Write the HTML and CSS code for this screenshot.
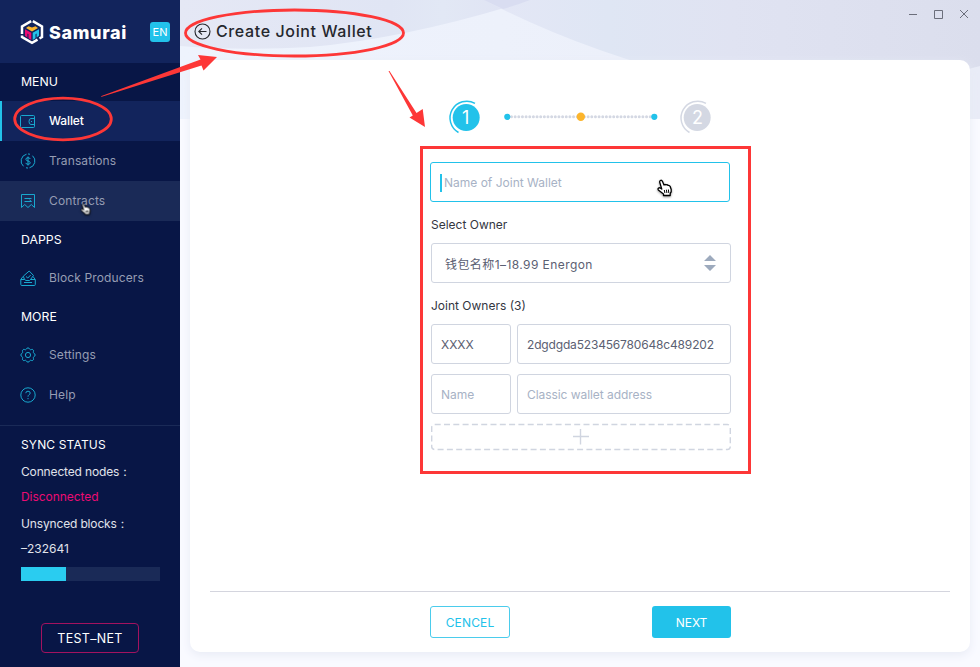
FILE: index.html
```html
<!DOCTYPE html>
<html lang="en">
<head>
<meta charset="utf-8">
<title>Samurai</title>
<link rel="stylesheet" href="styles.css">
</head>
<body>
<div class="app">
  <aside class="sidebar">
    <header class="brand">
      <svg class="logo" width="24" height="26" viewBox="0 0 24 26" fill="none">
        <path d="M2 15V7.400L11.200 2.200M12.800 2.200L22 7.400V18L19.500 19.500M17.500 20.700L12 23.800L2 18V16.500" stroke="#fff" stroke-width="2.500"/>
        <path d="M6 9L8.500 7.200L12 8.500L15.500 7.200L18 9L12 12.400Z" fill="#fcb52c"/>
        <path d="M5 10.300L11.300 13.800V21L8.500 19.300V15.200L7.400 14.600V18.400L5 16.800Z" fill="#ec0c73"/>
        <path d="M19 10.300L12.700 13.800V21L15.500 19.300V15.200L16.600 14.600V18.400L19 16.800Z" fill="#22c2ea"/>
      </svg>
      <span class="brand-name">Samurai</span>
      <span class="lang">EN</span>
    </header>
    <nav>
      <h2>MENU</h2>
      <a class="item active">
        <svg width="16" height="16" viewBox="0 0 16 16"><path d="M1.500 2.500H13.500Q14.500 2.500 14.500 3.500V13.500Q14.500 14.500 13.500 14.500H1.500Q.5 14.500 .5 13.500V3.500Q.5 2.500 1.500 2.500M14.500 5.500H11Q9 5.500 9 8.500Q9 11.500 11 11.500H14.500M11 8.500H12"/></svg>
        <span>Wallet</span>
      </a>
      <a class="item">
        <svg width="16" height="16" viewBox="0 0 16 16"><path d="M6.500 1.200A7 7 0 0 0 3.500 13.300M6 14.700Q7 15.100 8 15M9.500 14.800A7 7 0 0 0 12.500 2.700M10 1.300Q9 .9 8 1M10.200 6Q10 4.700 8 4.700Q5.900 4.700 5.900 6.300Q5.900 7.600 8 8Q10.200 8.400 10.200 9.800Q10.200 11.300 8 11.300Q6 11.300 5.800 9.900M8 3.500V12.500"/></svg>
        <span>Transations</span>
      </a>
      <a class="item hover">
        <svg width="16" height="16" viewBox="0 0 16 16"><path d="M1.500 1.500H14.500V14.500L11.300 11.500L8 14.500L4.700 11.500L1.500 14.500ZM4.500 5.500H11.500M4.500 8.500H11.500L9.500 6.900"/></svg>
        <span>Contracts</span>
      </a>
      <h2>DAPPS</h2>
      <a class="item">
        <svg width="16" height="16" viewBox="0 0 16 16"><path d="M3 6.500L.8 9.500V14.500Q.8 15.500 1.800 15.500H14.300Q15.300 15.500 15.300 14.500V9.500L13 6.500M.8 9.500H4.500L3.300 6.200L9.200 1L13.500 5.500L10.500 9.500H15M4 12.500H12M6 6.500L7.800 8L10.700 5M4.500 9.500L6 10.500H9.500L10.500 9.500"/></svg>
        <span>Block Producers</span>
      </a>
      <h2>MORE</h2>
      <a class="item">
        <svg width="16" height="16" viewBox="0 0 16 16"><circle cx="8" cy="8" r="2.600"/><path d="M8 .9Q9.300 .9 9.700 2.200Q10.200 3.200 11.300 2.500Q12.300 1.900 13.100 2.900Q14 3.800 13.400 4.700Q12.900 5.800 13.900 6.200Q15.100 6.700 15.100 8Q15.100 9.300 13.900 9.800Q12.900 10.200 13.400 11.300Q14 12.200 13.100 13.100Q12.300 14 11.300 13.500Q10.200 12.800 9.700 13.800Q9.300 15.100 8 15.100Q6.700 15.100 6.300 13.800Q5.800 12.800 4.700 13.500Q3.700 14 2.900 13.100Q2 12.200 2.600 11.300Q3.100 10.200 2.100 9.800Q.9 9.300 .9 8Q.9 6.700 2.100 6.200Q3.100 5.800 2.600 4.700Q2 3.800 2.900 2.900Q3.700 1.900 4.700 2.500Q5.800 3.200 6.300 2.200Q6.700 .9 8 .9Z"/></svg>
        <span>Settings</span>
      </a>
      <a class="item">
        <svg width="16" height="16" viewBox="0 0 16 16"><circle cx="8" cy="8" r="7.200"/><path d="M5.800 6.200Q5.800 4.200 8 4.200Q10.200 4.200 10.200 6Q10.200 7 9.100 7.700Q8 8.400 8 9.700M8 11V12.200"/></svg>
        <span>Help</span>
      </a>
    </nav>
    <section class="sync">
      <h3>SYNC STATUS</h3>
      <p class="nodes">Connected nodes<i>:</i></p>
      <p class="bad">Disconnected</p>
      <p class="blocks">Unsynced blocks<i>:</i></p>
      <p class="count">–232641</p>
      <div class="progress"><div class="bar"></div></div>
      <button class="net">TEST–NET</button>
    </section>
  </aside>

  <main class="main">
    <svg class="waves" width="800" height="119" viewBox="0 0 800 119">
      <defs>
        <linearGradient id="base"><stop offset="0" stop-color="#eef3fd"/><stop offset=".4" stop-color="#edf1fb"/><stop offset="1" stop-color="#e9ecf7"/></linearGradient>
        <linearGradient id="left"><stop offset="0" stop-color="#e5e8f5"/><stop offset=".6" stop-color="#e0e5f4"/><stop offset=".75" stop-color="#e2e8f5"/><stop offset="1" stop-color="#dfe2f3"/></linearGradient>
        <linearGradient id="right"><stop offset="0" stop-color="#e4e7f6"/><stop offset=".25" stop-color="#dfe6f4"/><stop offset=".5" stop-color="#e0e3f2"/><stop offset="1" stop-color="#dbdeed"/></linearGradient>
      </defs>
      <path d="M0 0H800V119H0Z" fill="url(#base)"/>
      <path d="M0 0H350Q230 38 130 47Q60 51 0 46Z" fill="url(#left)"/>
      <path d="M304 0H800V66Q760 78 710 80H520Q400 50 304 0Z" fill="url(#right)"/>
      <path d="M304 0H350Q337 5 323 9Z" fill="#d9ddf1"/>
    </svg>
    <header class="titlebar">
      <svg class="back" width="17" height="17" viewBox="0 0 17 17"><circle cx="8.500" cy="8.500" r="7.500"/><path d="M12.500 8.500H5M8 5.300L4.800 8.500L8 11.700"/></svg>
      <h1>Create Joint Wallet</h1>
      <svg class="controls" width="62" height="12" viewBox="0 0 62 12"><path d="M1 6.500H9M26.500 2.500H34.500V10.500H26.500ZM52 2L60 10M60 2L52 10"/></svg>
    </header>
    <div class="card">
      <svg class="steps" width="264" height="36" viewBox="0 0 264 36">
        <g fill="none" stroke-width="1.500">
          <path d="M28 4.400A16.300 16.300 0 1 0 11.500 33.500" stroke="#22c2ea"/>
          <path d="M259 4.400A16.300 16.300 0 1 0 242.500 33.500" stroke="#d4d8e3"/>
        </g>
        <circle cx="19.200" cy="18.500" r="13.500" fill="#22c2ea"/>
        <circle cx="250.200" cy="18.500" r="13.500" fill="#d4d8e3"/>
        <path d="M64.500 17.800H205" stroke="#d4d8e3" stroke-width="3" stroke-linecap="round" stroke-dasharray="0 3.650"/>
        <circle cx="60.300" cy="17.800" r="3.100" fill="#22c2ea"/>
        <circle cx="133.800" cy="17.800" r="4.200" fill="#fcb52c"/>
        <circle cx="207.300" cy="17.800" r="3.100" fill="#22c2ea"/>
        <text x="18.700" y="24.800">1</text>
        <text x="250.500" y="24.800">2</text>
      </svg>
      <form class="form">
        <div class="field focus"><span class="caret"></span>Name of Joint Wallet</div>
        <label class="l1">Select Owner</label>
        <div class="field select"><span>钱包名称1–18.99 Energon</span>
          <svg width="12" height="16" viewBox="0 0 12 16"><path d="M6 0L12 6H0ZM0 10H12L6 16Z" fill="#9daabd"/></svg>
        </div>
        <label class="l2">Joint Owners (3)</label>
        <div class="row"><div class="field value">XXXX</div><div class="field value hash">2dgdgda523456780648c489202</div></div>
        <div class="row"><div class="field">Name</div><div class="field addr">Classic wallet address</div></div>
        <svg class="add" width="300" height="28" viewBox="0 0 300 28"><rect x=".7" y="1.500" width="298.600" height="25" rx="3" stroke-dasharray="6 3.300"/><path d="M142 13.500H158M149.500 6V21.500"/></svg>
      </form>
      <footer class="actions">
        <button class="cancel">CENCEL</button>
        <button class="next">NEXT</button>
      </footer>
    </div>
  </main>

  <svg class="overlay" width="980" height="667" viewBox="0 0 980 667">
    <defs>
      <g id="hand">
        <path d="M3.400 1Q4.600 .3 5.300 1.600L7 5.500Q8 4.500 9 5.400Q10.200 4.700 11 5.900Q12.500 5.500 13.200 7L14.200 10Q14.700 12 13.200 14V16H6.500V14.500L1.300 10.500Q.4 9 2 8.300Q3 8 4.800 9.600L2.700 2.800Q2.400 1.600 3.400 1Z" fill="#fff" stroke="#000" stroke-width="1.300" stroke-linejoin="round"/>
        <path d="M7.300 10.500L7.900 13.500M9.400 10.200L9.900 13.500M11.400 10L11.800 13.500" stroke="#000" stroke-width="1"/>
      </g>
    </defs>
    <g fill="none" stroke="#fd3737">
      <ellipse cx="63" cy="119" rx="48.300" ry="20.800" stroke-width="2.800"/>
      <ellipse cx="294.500" cy="33" rx="109" ry="23" stroke-width="2.800"/>
      <rect x="421.500" y="147.500" width="328" height="325" stroke-width="3"/>
    </g>
    <path d="M101 97L101.500 96L200.500 59.500L198 55L217 57L203.500 70.500L201.500 65.500Z" fill="#fd3737"/>
    <path d="M388.500 71L389.500 71L416.500 113L422.700 109L425 127L409.500 117.500L412.800 115.500Z" fill="#fd3737"/>
    <g class="pointers">
      <use href="#hand" transform="translate(657 179.500)"/>
      <use href="#hand" transform="translate(80.500 203.500) scale(.68)"/>
    </g>
  </svg>
</div>
</body>
</html>
```
FILE: styles.css
```css
* { box-sizing: border-box; }
body { margin: 0; font-family: Inter, "Noto Sans CJK SC", sans-serif; font-size: 12px; }
h1, h2, h3, p { margin: 0; font-weight: 400; }
button { font: inherit; padding: 0; }
.app { position: relative; display: flex; width: 980px; height: 667px; overflow: hidden; }
.sidebar { width: 180px; background: #081646; color: #fff; }
.brand { height: 63px; padding: 1px 10px 0 20px; display: flex; align-items: center; background: #12245c; }
.brand-name { margin-left: 5px; width: 101px; padding-top: 1px; font-size: 18px; font-weight: 800; letter-spacing: .65px; }
.lang { width: 20px; height: 20px; border-radius: 3px; background: #22c2ea; font-size: 11px; line-height: 20px; text-align: center; }
nav h2 { height: 37px; line-height: 38px; padding-left: 21px; font-size: 12.3px; }
nav h2:first-child { height: 38px; }
.item { display: flex; align-items: center; gap: 13px; height: 40px; padding-left: 20px; color: #969db3; letter-spacing: .12px; }
.item span { margin-top: -1px; }
.item svg { fill: none; stroke: #18a8cf; stroke-width: 1; }
.item.active { background: #12245c; border-left: 2px solid #22c2ea; padding-left: 18px; color: #fff; font-weight: 500; letter-spacing: -.1px; }
.item.hover { background: #1a2a57; }
.sync { margin-top: 10px; padding: 0 20px 0 21px; border-top: 1px solid #1a2a57; display: flex; flex-direction: column; }
.sync h3 { height: 39px; line-height: 38px; font-size: 12px; letter-spacing: .15px; }
.sync p { line-height: 16px; font-size: 12px; letter-spacing: -.15px; color: #e0e3eb; }
.sync i { font-style: normal; margin-left: 4px; }
.sync .nodes { margin-top: -1px; }
.sync .bad { margin-top: 9px; letter-spacing: -.05px; color: #ec0c73; }
.sync .blocks { margin-top: 11px; }
.sync .count { margin-top: 9px; letter-spacing: 0; }
.progress { height: 14px; margin-top: 10px; background: #1a2a57; }
.bar { width: 45px; height: 14px; background: #2accf0; }
.net { align-self: center; width: 98px; height: 30px; margin: 42px 1px 0 0; border: 1.500px solid #a3125f; border-radius: 4px; background: none; color: #fff; font-size: 12.5px; letter-spacing: .3px; }
.main { position: relative; width: 800px; padding: 0 10px; background: #f9faff; }
.waves { position: absolute; left: 0; top: 0; }
.titlebar { position: relative; height: 60px; display: flex; align-items: flex-start; }
.back { margin: 23px 5px 0 4px; fill: none; stroke: #25272d; stroke-width: 1.100; }
.titlebar h1 { margin-top: 21px; line-height: 21px; font-size: 16px; font-weight: 500; letter-spacing: .62px; color: #25272d; }
.controls { margin: 8px 0 0 auto; fill: none; stroke: #6b6e7b; }
.card { position: relative; height: 592px; padding-top: 39px; border-radius: 10px; background: #fff; box-shadow: 0 3px 10px #e8ebf5; display: flex; flex-direction: column; }
.steps { margin-left: 257px; }
.steps text { fill: #fff; font-size: 18px; text-anchor: middle; }
.form { width: 300px; margin: 27px 0 0 241px; display: flex; flex-direction: column; color: #33363f; }
.field { height: 40px; padding: 1px 0 0 9px; display: flex; align-items: center; border: 1px solid #d0d5e0; border-radius: 3px; color: #a7b2c5; white-space: nowrap; }
.focus { width: 300px; margin-left: -1px; border-color: #22c2ea; }
.caret { width: 2px; height: 18px; margin-right: 2px; background: #22c2ea; }
.form label { line-height: 16px; letter-spacing: 0; }
.l1 { margin: 15px 0 10px; }
.l2 { margin: 15px 0 10px; }
.select { justify-content: space-between; padding: 0 14px 0 13px; color: #5b6072; letter-spacing: .42px; }
.row { display: grid; grid-template-columns: 80px 214px; gap: 6px; margin-bottom: 10px; }
.row .field { min-width: 0; }
.row .value { color: #5b6072; }
.hash { letter-spacing: -.17px; }
.addr { letter-spacing: -.06px; }
.add { fill: none; stroke: #d0d5e0; stroke-width: 1.400; margin-top: -1px; }
.actions { margin: auto 20px 0; height: 61px; border-top: 1px solid #d4d5de; display: flex; align-items: flex-start; padding: 14px 0 0 220px; gap: 142px; }
.actions button { height: 32px; width: 80px; border-radius: 3px; font-size: 12px; }
.actions .cancel { border: 1.500px solid #4bccec; background: #fff; color: #22c2ea; letter-spacing: .15px; }
.actions .next { width: 79px; border: 0; background: #22c2ea; color: #fff; }
.overlay { position: absolute; left: 0; top: 0; pointer-events: none; }
.pointers { filter: drop-shadow(0 1px 1px rgba(0, 0, 0, .4)); }
```
